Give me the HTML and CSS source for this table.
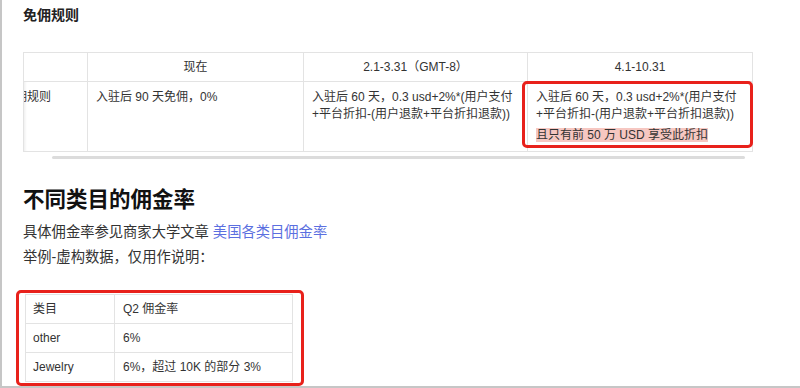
FILE: index.html
```html
<!DOCTYPE html>
<html lang="zh-CN">
<head>
<meta charset="utf-8">
<title>免佣规则</title>
<link rel="stylesheet" href="styles.css">
</head>
<body>
<div class="page">
  <h3 class="sub-title">免佣规则</h3>

  <div class="table-wrap">
    <table class="rule-table">
      <colgroup>
        <col class="c1"><col class="c2"><col class="c3"><col class="c4">
      </colgroup>
      <thead>
        <tr>
          <th></th>
          <th>现在</th>
          <th>2.1-3.31（GMT-8）</th>
          <th>4.1-10.31</th>
        </tr>
      </thead>
      <tbody>
        <tr>
          <td class="cut"><div class="clip"><span class="shift">免佣规则</span></div></td>
          <td>入驻后 90 天免佣，0%</td>
          <td>入驻后 60 天，0.3 usd+2%*(用户支付+平台折扣-(用户退款+平台折扣退款))</td>
          <td>入驻后 60 天，0.3 usd+2%*(用户支付+平台折扣-(用户退款+平台折扣退款))
            <p class="note"><span class="hl">且只有前 50 万 USD 享受此折扣</span></p>
          </td>
        </tr>
      </tbody>
    </table>
    <div class="mark mark-1"></div>
  </div>
  <div class="scrollbar"></div>

  <h2 class="title">不同类目的佣金率</h2>
  <p class="text">具体佣金率参见商家大学文章 <a class="link" href="#">美国各类目佣金率</a></p>
  <p class="text">举例-虚构数据，仅用作说明：</p>

  <div class="table-wrap2">
    <table class="rate-table">
      <colgroup><col class="d1"><col class="d2"></colgroup>
      <tr><td>类目</td><td>Q2 佣金率</td></tr>
      <tr><td>other</td><td>6%</td></tr>
      <tr><td>Jewelry</td><td>6%，超过 10K 的部分 3%</td></tr>
    </table>
    <div class="mark mark-2"></div>
  </div>
</div>
</body>
</html>
```

FILE: styles.css
```css
html, body {
  margin: 0;
  padding: 0;
}
body {
  width: 800px;
  height: 388px;
  box-sizing: border-box;
  overflow: hidden;
  background: #ffffff;
  border-left: 2px solid #c6c6c6;
  border-bottom: 2px solid #c6c6c6;
  font-family: "Liberation Sans", "Noto Sans CJK SC", sans-serif;
  color: #333333;
}
.page {
  padding-left: 21px;
}
.sub-title {
  margin: 0;
  padding-top: 5px;
  font-size: 14px;
  line-height: 20px;
  font-weight: bold;
  color: #222222;
}
.table-wrap {
  position: relative;
  margin-top: 27px;
  width: 729px;
}
.rule-table {
  border-collapse: collapse;
  table-layout: fixed;
  width: 729px;
  font-size: 12px;
  line-height: 17px;
  color: #333333;
}
.rule-table col.c1 { width: 64px; }
.rule-table col.c2 { width: 216px; }
.rule-table col.c3 { width: 224px; }
.rule-table col.c4 { width: 225px; }
.rule-table th,
.rule-table td {
  border: 1px solid #e3e3e3;
}
.rule-table th {
  height: 28px;
  padding: 0 8px;
  font-weight: normal;
  text-align: center;
  vertical-align: middle;
}
.rule-table td {
  height: 54px;
  padding: 7px 8px 7px 8px;
  vertical-align: top;
  text-align: left;
}
.rule-table td.cut {
  padding-left: 0;
  padding-right: 0;
  box-shadow: inset 3px 0 3px -2px rgba(0,0,0,0.08);
}
.clip {
  overflow: hidden;
  white-space: nowrap;
}
.shift {
  display: block;
  margin-left: -21px;
}
.note {
  margin: 4px 0 0 0;
}
.hl {
  background: #f6c7c1;
  padding: 0;
}
.mark {
  position: absolute;
  border: 3px solid #e8211b;
  border-radius: 5px;
  box-sizing: border-box;
  pointer-events: none;
}
.mark-1 {
  left: 499px;
  top: 29px;
  width: 231px;
  height: 67px;
}
.scrollbar {
  margin: 4px 0 0 29px;
  width: 693px;
  height: 3px;
  border-radius: 2px;
  background: #dcdcdc;
}
.title {
  margin: 27px 0 0 0;
  font-size: 21.5px;
  line-height: 28px;
  font-weight: bold;
  color: #111111;
}
.text {
  margin: 0;
  font-size: 14.3px;
  line-height: 25px;
  color: #333333;
}
.title + .text {
  margin-top: 6px;
}
.link {
  color: #5b6fe0;
  text-decoration: none;
}
.table-wrap2 {
  position: relative;
  margin: 24px 0 0 2px;
  width: 267px;
}
.rate-table {
  border-collapse: collapse;
  table-layout: fixed;
  width: 267px;
  font-size: 12px;
  line-height: 17px;
  color: #333333;
}
.rate-table col.d1 { width: 89px; }
.rate-table col.d2 { width: 178px; }
.rate-table td {
  height: 28px;
  padding: 0 7px;
  border: 1px solid #e3e3e3;
  vertical-align: middle;
}
.rate-table td + td {
  padding-left: 8px;
}
.mark-2 {
  left: -9px;
  top: -4px;
  right: -12px;
  bottom: -4px;
}
```
